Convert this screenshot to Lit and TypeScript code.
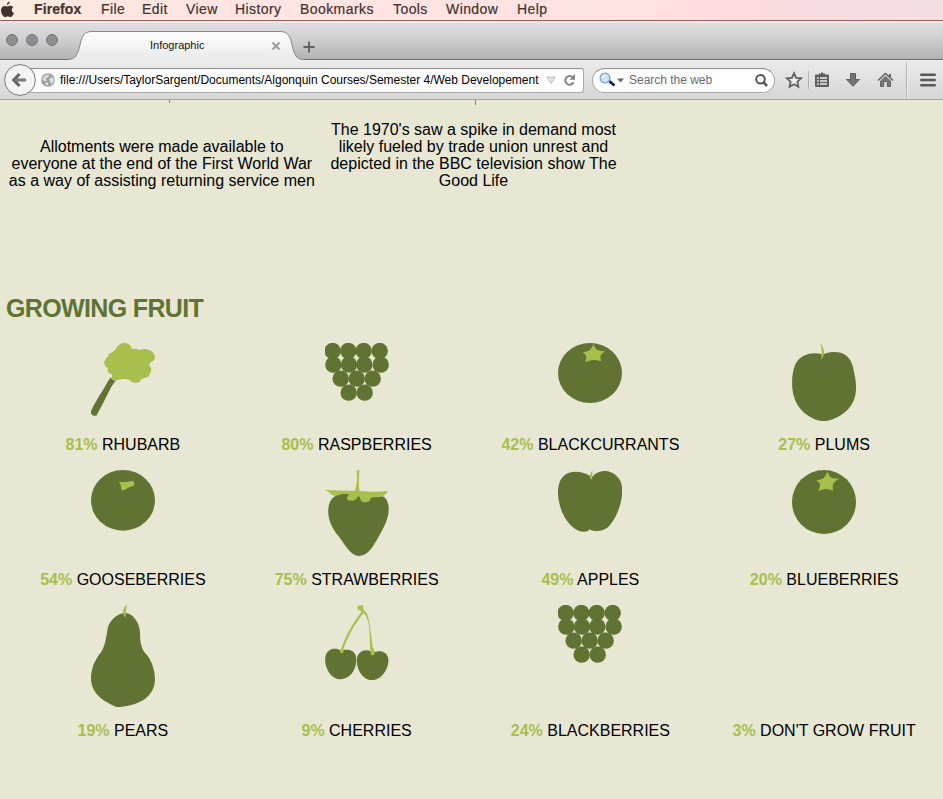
import { LitElement, html, css, svg } from "lit";
import { customElement } from "lit/decorators.js";

const D = "#607332";
const L = "#a8bf4e";

const cluster = svg`<g fill=${D}>${[
  [98, 48], [145, 48], [191, 48], [239, 48],
  [100, 89], [147, 89], [193, 89], [242, 89],
  [122, 131], [170, 131], [218, 131],
  [146, 173], [194, 173],
].map(([x, y]) => svg`<circle cx=${x} cy=${y} r="24.6"/>`)}</g>`;

interface Fruit { pct: string; name: string; box?: string; art?: unknown }

const fruits: Fruit[] = [
  { pct: "81%", name: "RHUBARB", box: "93 24 192 220", art: svg`
    <path fill=${D} d="M151 128C141 143 130 164 117 184C108 200 98 215 93 229C90 237 101 244 109 242C120 222 131 202 140 183C148 166 156 150 169 134Z"/>
    <path fill=${L} d="M154 133L157 118C146 117 140 108 144 99C135 97 130 85 134 77C138 69 145 66 146 57C154 55 162 48 168 41C174 28 188 21 200 25C209 28 213 33 216 42C225 43 230 39 233 44C237 44 238 46 240 45C250 40 268 42 278 52C286 62 287 72 280 77C268 82 263 90 272 96C276 110 270 118 264 125C252 132 244 126 239 141C230 144 215 145 208 134C200 130 185 132 170 135C165 139 158 137 154 133Z"/>` },
  { pct: "80%", name: "RASPBERRIES", box: "75 24 192 174", art: cluster },
  { pct: "42%", name: "BLACKCURRANTS", box: "54 24 192 180", art: svg`
    <ellipse cx="150" cy="114" rx="96" ry="90" fill=${D}/>
    <path fill=${L} d="M160 27Q166 42 172 45Q184 49 195 49Q182 58 181 66Q181 73 184 79Q170 74 159 75Q146 76 135 82Q140 70 139 64Q136 56 128 52Q142 51 149 46Q157 38 160 27Z"/>` },
  { pct: "27%", name: "PLUMS", box: "66 24 192 234", art: svg`
    <path fill=${D} d="M154 57C120 50 88 60 74 92C64 120 64 162 72 185C84 230 130 258 162 258C192 258 234 232 248 203C260 180 261 150 253 115C249 85 237 52 195 51C180 50 168 54 160 58Z"/>
    <path fill=${L} d="M151 24C163 38 168 58 153 74C156 55 156 42 151 24Z"/>` },
  { pct: "54%", name: "GOOSEBERRIES", box: "93 30 192 182", art: svg`
    <ellipse cx="189" cy="121" rx="96" ry="91" fill=${D}/>
    <path fill=${L} d="M176 65C190 68 205 65 218 63C225 65 225 76 218 79C205 80 202 88 188 92C181 88 186 75 176 65Z"/>` },
  { pct: "75%", name: "STRAWBERRIES", box: "75 405 192 258", art: svg`
    <path fill=${D} d="M150 478C120 473 90 480 85 520C82 555 98 582 118 607C138 634 152 662 178 663C206 662 222 630 240 598C254 572 268 547 266 515C263 495 255 485 245 483Z"/>
    <path fill=${L} d="M75 465C100 466 140 468 165 467C172 445 172 425 170 407L178 405C177 425 175 445 178 467C205 470 235 472 264 468C258 480 245 488 225 487C215 485 211 488 209 498C195 505 183 503 181 492C179 485 176 482 173 484C170 498 155 500 142 494C138 488 145 482 148 478C125 475 115 478 105 483C95 482 88 470 75 465Z"/>` },
  { pct: "49%", name: "APPLES", box: "54 405 192 186", art: svg`
    <path fill=${D} d="M151 424C130 408 90 405 72 422C50 440 52 480 58 505C68 550 100 590 130 590C140 591 147 587 149 583C155 588 165 588 172 588C190 587 200 582 210 570C235 540 250 490 246 455C243 425 215 405 190 408C172 411 163 418 157 425Z"/>
    <path fill=${L} d="M158 406C148 415 147 428 154 434C159 428 156 418 158 406Z"/>` },
  { pct: "20%", name: "BLUEBERRIES", box: "66 405 192 192", art: svg`
    <circle cx="162" cy="501" r="96" fill=${D}/>
    <path fill=${L} d="M172 410Q177 424 184 428Q195 431 207 431Q192 441 189 448Q187 457 189 467Q177 462 168 462Q156 463 145 468Q151 455 150 448Q148 441 139 436Q153 434 161 429Q170 420 172 410Z"/>` },
  { pct: "19%", name: "PEARS", box: "93 435 192 306", art: svg`
    <path fill=${D} d="M196 459C170 457 145 488 143 506C138 535 135 560 122 578C105 598 93 625 93 655C93 700 130 725 170 741C215 740 270 725 283 675C290 640 275 600 258 582C245 568 240 550 240 515C238 485 215 458 196 459Z"/>
    <path fill=${L} d="M201 435C187 442 186 460 196 474C200 460 196 448 201 435Z"/>` },
  { pct: "9%", name: "CHERRIES", box: "75 44 192 226", art: svg`
    <path fill=${D} d="M122 180C105 170 80 175 76 200C72 235 95 267 121 267C150 266 172 240 168 200C166 180 145 177 130 179ZM215 184C195 174 172 182 170 210C170 240 190 270 216 270C245 268 268 235 265 205C262 183 240 180 224 185Z"/>
    <path fill=${L} d="M172 50C175 44 185 46 190 45C190 50 190 56 191 58L200 68C210 90 213 130 218 170L224 185Q226 196 214 195L211 185C210 150 210 100 202 88C198 75 194 70 190 69C165 100 140 145 130 177C133 185 130 189 124 188C118 187 119 180 124 175C140 130 160 95 184 66L182 61C173 60 171 55 172 50Z"/>` },
  { pct: "24%", name: "BLACKBERRIES", box: "75 24 192 174", art: cluster },
  { pct: "3%", name: "DON'T GROW FRUIT" },
];

@customElement("mac-menu-bar")
export class MacMenuBar extends LitElement {
  static styles = css`
    :host { display: block; font-family: "Liberation Sans", Arial, sans-serif; }
    .bar {
      box-sizing: border-box; height: 21px; display: grid; align-items: center;
      grid-template-columns: 34px 67px 41px 44px 49px 65px 93px 53px 71px 1fr;
      border-bottom: 1px solid #92605a; padding-bottom: 1px;
      background: linear-gradient(90deg, #faede0 0, #fde6df 100px, #ffe5e3 280px, #ffe3e1 630px, #fddde0 730px, #f5dde2 850px, #f3dfe4 100%);
      color: #44322e; font-size: 14px; line-height: 17px; white-space: nowrap;
    }
    .item { letter-spacing: 0.42px; -webkit-text-stroke: 0.2px #44322e; }
    .app { font-weight: bold; letter-spacing: 0.1px; }
    .apple { display: block; }
  `;
  render() {
    return html`<nav class="bar">
      <svg class="apple" width="15" height="17" viewBox="0 0 15 17">
        <path fill="#44322e" d="M9.6 .5C9.8 2.300 8.400 3.900 6.900 3.900C6.700 2.200 8.100 .7 9.600 .5ZM7.500 5.500C8.300 5.500 9.200 4.700 10.600 4.800C11.800 4.900 12.700 5.400 13.300 6.300C11 7.700 11.300 11 14 12C13.300 14 11.900 16 10.500 16C9.400 16 9 15.400 7.700 15.400C6.400 15.400 6 16 5 16C2.800 16 -.9 9.500 2.300 6.100C4.400 4 6.200 5.500 7.500 5.500Z"/>
      </svg>
      <span class="item app">Firefox</span>
      ${["File", "Edit", "View", "History", "Bookmarks", "Tools", "Window", "Help"].map(
        (t) => html`<span class="item">${t}</span>`)}
    </nav>`;
  }
}

@customElement("browser-tabs")
export class BrowserTabs extends LitElement {
  static styles = css`
    :host { display: block; font-family: "Liberation Sans", Arial, sans-serif; }
    .strip {
      box-sizing: border-box; height: 39px; display: flex; align-items: flex-start;
      background: linear-gradient(#ededed 0, #dedede 3px, #cfcfcf 18px, #b3b3b3 38px);
      border-bottom: 1px solid #6d6d6d;
    }
    .lights { display: flex; gap: 8px; padding: 13px 0 0 6px; width: 62px; box-sizing: border-box; }
    .light { width: 12px; height: 12px; flex: none; box-sizing: border-box; border-radius: 50%; background: #8d8d92; border: 1px solid #747478; }
    .tab { position: relative; width: 236px; height: 39px; display: flex; margin-left: 5px; }
    .shape { position: absolute; left: 0; top: 0; }
    .title { position: relative; margin: 17px 0 0 83px; width: 55px; font-size: 11px; line-height: 15px; color: #111; white-space: nowrap; }
    .close { position: relative; margin: 20px 0 0 66px; }
    .plus { margin: 20px 0 0 0; }
  `;
  render() {
    return html`<div class="strip">
      <div class="lights"><i class="light"></i><i class="light"></i><i class="light"></i></div>
      <div class="tab">
        <svg class="shape" width="237" height="39" viewBox="0 0 237 39">
          <defs><linearGradient id="g" x1="0" y1="0" x2="0" y2="1"><stop offset=".25" stop-color="#fafafa"/><stop offset="1" stop-color="#e9e9e9"/></linearGradient></defs>
          <path fill="url(#g)" d="M1 39V38.500C9 38.500 11 33 13 24C15 14 18 10.500 25 10.500H213C220 10.500 223 14 225 24C227 33 229 38.500 237 38.500V39Z"/>
          <path fill="none" stroke="#858585" d="M0 38.500C9 38.500 11 33 13 24C15 14 18 10.500 25 10.500H213C220 10.500 223 14 225 24C227 33 229 38.500 237 38.500"/>
        </svg>
        <span class="title">Infographic</span>
        <svg class="close" width="10" height="10" viewBox="0 0 10 10"><path d="M1.500 1.500L8.500 8.500M8.500 1.500L1.500 8.500" stroke="#a0a0a0" stroke-width="2.200"/></svg>
      </div>
      <svg class="plus" width="12" height="12" viewBox="0 0 12 12"><path d="M6 .5V11.500M.5 6H11.500" stroke="#606060" stroke-width="1.800"/></svg>
    </div>`;
  }
}

@customElement("browser-toolbar")
export class BrowserToolbar extends LitElement {
  static styles = css`
    :host { display: block; font-family: "Liberation Sans", Arial, sans-serif; }
    .bar {
      box-sizing: border-box; height: 40px; display: flex; align-items: center;
      background: linear-gradient(#ebebeb, #d6d6d6); border-bottom: 1px solid #a5a6a8; padding-left: 4px;
    }
    .back { position: relative; flex: none; }
    .url, .search {
      box-sizing: border-box; height: 25px; display: flex; align-items: center; flex: none; margin-top: 1px;
      background: linear-gradient(#f6f6f6, #fff 5px); border: 1px solid #a9a9ab; border-top-color: #8f8f92; white-space: nowrap; font-size: 12px; line-height: 16px;
    }
    .url { width: 556px; margin-left: -8px; border-radius: 0 3px 3px 0; padding-left: 12px; color: #000; }
    .address { width: 486px; margin-left: 5px; letter-spacing: -0.01px; }
    .search { width: 183px; margin-left: 8px; border-radius: 13px; padding-left: 6px; color: #6a6a70; }
    .hint { margin-left: 5px; width: 125px; letter-spacing: -0.02px; }
    .ic { flex: none; display: block; }
    .reload { margin-left: 7px; } .drop { margin-left: 1px; }
    .sep { flex: none; width: 1px; height: 18px; background: #b4b4b6; }
    .tall { height: 36px; width: 2px; background: linear-gradient(90deg, #b0b2b6 50%, #eee 50%); }
    .star { margin-left: 10px; } .sep1 { margin-left: 5px; } .list { margin-left: 5px; }
    .down { margin-left: 15px; } .home { margin-left: 16px; } .sep2 { margin-left: 12px; } .menu { margin-left: 12px; }
  `;
  render() {
    return html`<div class="bar">
      <svg class="back" width="32" height="32" viewBox="0 0 32 32">
        <circle cx="16" cy="16" r="15.400" fill="#f4f4f4" stroke="#77777a"/>
        <path d="M22 16H11M15.500 10L9.800 16L15.500 22" fill="none" stroke="#666" stroke-width="3.200"/>
        <path d="M21.500 16H11" stroke="#999" stroke-width="1"/>
      </svg>
      <div class="url">
        <svg class="ic" width="14" height="14" viewBox="0 0 14 14"><circle cx="7" cy="7" r="6.800" fill="#9c9c9c"/><path fill="#dedede" d="M2 4L6 1.500L8.500 2L7 4.500L4.500 5.500L6 7.500L3.500 8.500L1.500 6.500ZM8 6L11 4L13 6L12.500 9L10.500 11.500L9 9ZM4 10L6.500 9L8 12L5.500 12.500Z"/></svg>
        <span class="address">file:///Users/TaylorSargent/Documents/Algonquin Courses/Semester 4/Web Developement</span>
        <svg class="ic" width="10" height="10" viewBox="0 0 10 10"><path d="M.8 2H9.200L5 8.500Z" fill="#e4e4e4" stroke="#bbb"/></svg>
        <svg class="ic reload" width="14" height="14" viewBox="0 0 14 14"><path d="M9.800 4.200A4.400 4.400 0 1 0 10.600 9.300" fill="none" stroke="#858585" stroke-width="2"/><path d="M12 1V6.800H6.500Z" fill="#858585"/></svg>
      </div>
      <div class="search">
        <svg class="ic" width="17" height="16" viewBox="0 0 17 16"><path d="M9.500 8.500L15.500 13.500" stroke="#1c1c50" stroke-width="2.800"/><circle cx="6" cy="6" r="4.800" fill="#cfe5fa" stroke="#7cabe0" stroke-width="1.600"/><path d="M3.500 6A3 3 0 0 1 6 3.500" fill="none" stroke="#fff" stroke-width="1.500"/></svg>
        <svg class="ic drop" width="7" height="5" viewBox="0 0 7 5"><path d="M0 .5H7L3.500 4.500Z" fill="#666"/></svg>
        <span class="hint">Search the web</span>
        <svg class="ic" width="15" height="15" viewBox="0 0 15 15"><circle cx="6.500" cy="6.200" r="4.300" fill="none" stroke="#555" stroke-width="2"/><path d="M9.500 9.200L13 13" stroke="#555" stroke-width="2.600"/></svg>
      </div>
      <svg class="ic star" width="18" height="18" viewBox="0 0 18 18"><path d="M9 2.200L11.100 6.800L16 7.300L12.400 10.700L13.400 15.700L9 13.200L4.600 15.700L5.600 10.700L2 7.300L6.900 6.800Z" fill="#eee" stroke="#5f5f5f" stroke-width="1.800"/></svg>
      <i class="sep sep1"></i>
      <svg class="ic list" width="16" height="16" viewBox="0 0 16 16"><path fill="#5f5f5f" d="M5 2.500V1.500H6.500L8 0L9.500 1.500H11V2.500H14Q15 2.500 15 3.500V14Q15 15 14 15H2Q1 15 1 14V3.500Q1 2.500 2 2.500Z"/><path stroke="#eee" stroke-width="1.700" d="M3 6H4.700M6 6H13M3 9H4.700M6 9H13M3 12H4.700M6 12H13"/></svg>
      <svg class="ic down" width="16" height="16" viewBox="0 0 16 16"><path fill="#757575" stroke="#5c5c5c" d="M5.500 1.500H10.500V7.500H14.500L8 14.300L1.500 7.500H5.500Z"/></svg>
      <svg class="ic home" width="17" height="16" viewBox="0 0 17 16"><path d="M1 8.500L8.500 1.500L16 8.500" fill="none" stroke="#5f5f5f" stroke-width="1.500"/><path fill="#777" stroke="#626262" d="M3.500 9L8.500 4.500L13.500 9V14.500H10.300V9.500H6.700V14.500H3.500Z"/><path fill="#636363" d="M12 2H14V6L12 4Z"/></svg>
      <i class="sep tall sep2"></i>
      <svg class="ic menu" width="16" height="14" viewBox="0 0 16 14"><path d="M1.300 1.800H14.700M1.300 7H14.700M1.300 12.200H14.700" stroke="#585858" stroke-width="2.600" stroke-linecap="round"/></svg>
    </div>`;
  }
}

@customElement("app-root")
export class AppRoot extends LitElement {
  static styles = css`
    :host { display: block; height: 799px; overflow: hidden; background: #e7e7d4; font-family: "Liberation Sans", Arial, sans-serif; color: #000; }
    .timeline { position: relative; display: grid; grid-template-columns: repeat(3, 1fr); align-items: end; height: 89px; width: 935px; margin-left: 6px; text-align: center; font-size: 16px; line-height: 17px; white-space: nowrap; }
    .note { margin: 0; }
    .tick { position: absolute; top: 0; width: 1px; height: 3px; background: #85876d; }
    .t1 { left: 163px; } .t2 { left: 469px; height: 5px; }
    .heading { margin: 104px 0 0 6px; font-size: 25px; line-height: 30px; font-weight: bold; letter-spacing: -0.64px; color: #607332; }
    .fruits { display: grid; width: 935px; margin: 20px 0 0 6px; grid-template-columns: repeat(4, 1fr); grid-template-rows: 111px 119px 135px; row-gap: 16px; }
    .fruit { display: flex; flex-direction: column; align-items: center; }
    .art { display: block; width: 64px; }
    .caption { margin-top: auto; font-size: 16px; line-height: 18px; white-space: nowrap; }
    .pct { color: #a8bf4e; font-weight: bold; }
  `;
  render() {
    return html`
      <mac-menu-bar></mac-menu-bar>
      <browser-tabs></browser-tabs>
      <browser-toolbar></browser-toolbar>
      <section class="timeline">
        <i class="tick t1"></i><i class="tick t2"></i>
        <p class="note">Allotments were made available to<br>everyone at the end of the First World War<br>as a way of assisting returning service men</p>
        <p class="note">The 1970's saw a spike in demand most<br>likely fueled by trade union unrest and<br>depicted in the BBC television show The<br>Good Life</p>
      </section>
      <h2 class="heading">GROWING FRUIT</h2>
      <section class="fruits">
        ${fruits.map((f) => html`<div class="fruit">
          ${f.box ? html`<svg class="art" viewBox=${f.box}>${f.art}</svg>` : ""}
          <span class="caption"><span class="pct">${f.pct}</span> ${f.name}</span>
        </div>`)}
      </section>`;
  }
}
